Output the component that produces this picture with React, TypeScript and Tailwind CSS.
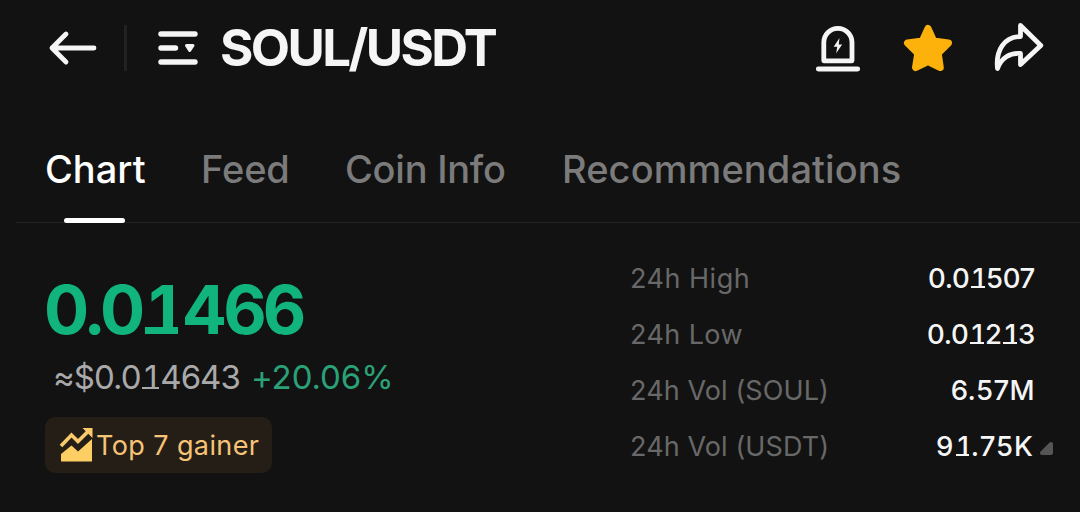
import { Fragment } from "react";

function Num({ children }: { children: string }) {
  return (
    <>
      {children.split("").map((c, i) =>
        c === "1" ? (
          <span
            key={i}
            className="relative inline-block w-[0.6em] pl-[0.04em] text-center tracking-normal after:absolute after:left-[0.06em] after:top-[calc(50%+0.364em-var(--bar))] after:h-(--bar) after:w-[0.49em] after:bg-current after:content-['']"
          >
            1
          </span>
        ) : (
          <Fragment key={i}>{c}</Fragment>
        ),
      )}
    </>
  );
}

const tabs = [
  { label: "Feed", style: "w-[144px] tracking-[-0.1px]" },
  { label: "Coin Info", style: "w-[217px] tracking-[-0.25px]" },
  { label: "Recommendations", style: "tracking-[0.1px]" },
];

const stats = [
  { label: "24h High", value: "0.01507", l: "tracking-[0.5px]", v: "tracking-[-0.3px]" },
  { label: "24h Low", value: "0.01213", l: "tracking-[0.4px]", v: "tracking-[-0.3px]" },
  { label: "24h Vol (SOUL)", value: "6.57M", l: "tracking-[0.1px]", v: "tracking-[0.4px]" },
  { label: "24h Vol (USDT)", value: "91.75K", l: "tracking-[0.1px]", v: "mr-[1px] tracking-[1px]" },
];

export default function App() {
  return (
    <div className="flex h-[512px] w-[1080px] flex-col overflow-hidden bg-[#121212] font-['Inter',sans-serif] text-[#f5f5f5]">
      <header className="flex h-[96px] items-center">
        <svg className="ml-[44px] h-[48px] w-[56px] shrink-0" viewBox="44 24 56 48" fill="none" stroke="currentColor" strokeWidth="4.8" strokeLinecap="round" strokeLinejoin="round">
          <path d="M94 48H52M66 34L52 48L66 62" />
        </svg>
        <div className="ml-[24px] h-[46px] w-[3px] bg-[#222]" />
        <svg className="ml-[25px] h-[48px] w-[54px] shrink-0" viewBox="152 24 54 48" fill="none" stroke="currentColor" strokeWidth="5.4" strokeLinecap="round">
          <path d="M161 34H195M161 48H175.500M161 62H195" />
          <path d="M186.500 45.500H193L189.700 50.500Z" fill="currentColor" strokeWidth="3" strokeLinejoin="round" />
        </svg>
        <h1 className="ml-[14px] text-[51px] font-bold leading-[96px] tracking-[-2.6px]">SOUL/USDT</h1>
        <svg className="ml-auto mr-[32px] h-[56px] w-[236px] shrink-0" viewBox="812 20 236 56" fill="none" stroke="currentColor" strokeWidth="4.800" strokeLinecap="round" strokeLinejoin="round">
          <path d="M823.800 60.800V42.500A14.100 14.100 0 0 1 852 42.500V60.800Z" />
          <path d="M818.300 69H857.700" strokeWidth="4.800" />
          <path d="M839.500 38L833.700 46.800H837.200L836.200 53.200L842.100 44.400H838.700Z" fill="currentColor" stroke="none" />
          <path d="M928 28.500L933.700 41L948.500 43L938.200 53.300L940.300 67.500L928 61.500L915.500 67.500L917.800 53.300L907.500 43L922.300 41Z" fill="#fcb10b" stroke="#fcb10b" strokeWidth="7" />
          <path d="M1020.500 25.500L1040.800 45.500L1020.500 64.500V53.500C1010 52.500 1001 58 997.500 68.500C995.500 50 1004.500 36.500 1020.500 36.500Z" />
        </svg>
      </header>
      <nav className="flex h-[127px] items-stretch text-[38px] font-medium leading-[147px]">
        <div className="ml-[16px] flex flex-1 border-b border-[#242424]">
          <div className="relative w-[155px] pl-[29px] tracking-[0px] text-white">
            Chart
            <div className="absolute -bottom-px left-[48px] h-[5px] w-[61px] rounded-full bg-white" />
          </div>
          <div className="flex pl-[30px] text-[#7b7b7b]">
            {tabs.map((t) => (
              <div key={t.label} className={t.style}>{t.label}</div>
            ))}
          </div>
        </div>
      </nav>
      <main className="flex flex-1 pt-[27px]">
        <section className="w-[630px] pl-[44px]">
          <div className="h-[96px] text-[67px] font-bold leading-[120px] tracking-[-3.8px] text-[#10b47c] [--bar:0.115em]">
            <Num>0.01466</Num>
          </div>
          <div className="ml-[9px] flex h-[62px] whitespace-nowrap text-[33px] leading-[62px] [--bar:0.07em]">
            <span className="w-[198px] tracking-[-1px] text-[#a9a9a9]"><Num>≈$0.014643</Num></span>
            <span className="tracking-[-0.1px] text-[#2aa176]">+20.06%</span>
          </div>
          <div className="ml-[1px] mt-[9px] flex h-[56px] w-[227px] items-center rounded-[10px] bg-[#241e16] pl-[14px] text-[27px] tracking-[0.4px] text-[#f6c377]">
            <svg className="h-[38px] w-[37px] shrink-0" viewBox="59 427 37 38">
              <path d="M61 447L71.500 436L78 442.500L88 432.500" fill="none" stroke="#fbcb6b" strokeWidth="3.600" />
              <path d="M82.500 429H92.500V439Z" fill="#fbcb6b" />
              <path d="M61 455L71.500 446.500L78 452.500L92 440V462.500H61Z" fill="#fcce63" />
            </svg>
            <span className="pt-[2px]">Top 7 gainer</span>
          </div>
        </section>
        <section className="w-[405px] text-[27.5px] leading-[56px]">
          {stats.map((s) => (
            <div key={s.label} className="flex h-[56px] justify-between">
              <span className={`${s.l} pt-px text-[27px] text-[#686868]`}>{s.label}</span>
              <span className="flex font-medium [--bar:0.085em]">
                <span className={s.v}><Num>{s.value}</Num></span>
              </span>
            </div>
          ))}
        </section>
        <svg className="ml-[4px] mt-[190px] h-[16px] w-[16px]" viewBox="0 0 16 16">
          <path d="M3 13L12 4V13Z" fill="#555" stroke="#555" strokeWidth="4" strokeLinejoin="round" />
        </svg>
      </main>
    </div>
  );
}
